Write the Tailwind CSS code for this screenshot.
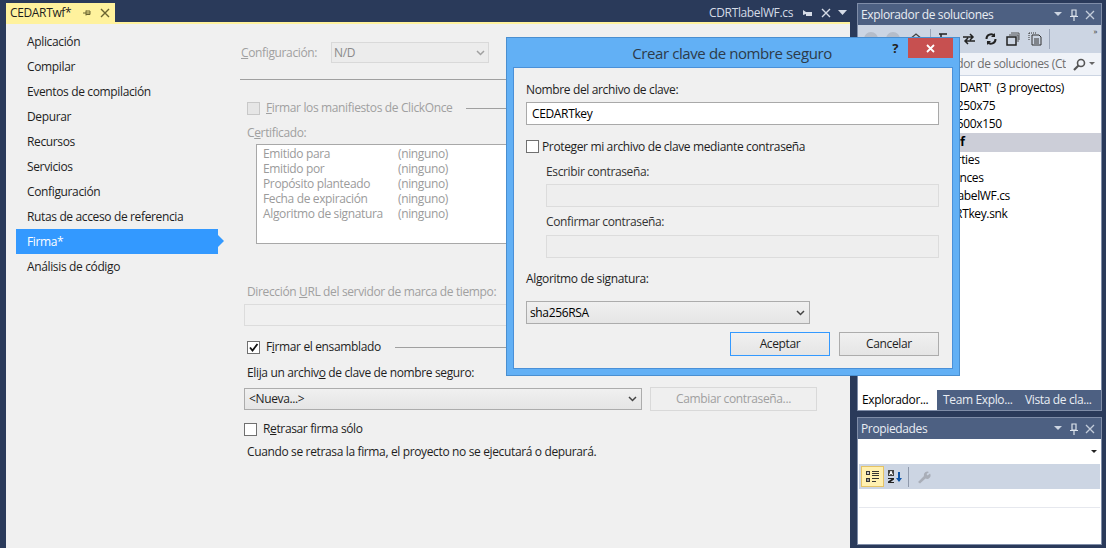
<!DOCTYPE html>
<html lang="es">
<head>
    <meta charset="UTF-8">
    <title>CEDARTwf</title>
    <script src="https://cdn.jsdelivr.net/npm/@tailwindcss/browser@4"></script>
</head>
<body class="w-[1106px] h-[548px] overflow-hidden relative bg-[#2a3a5a] font-['Open_Sans','Noto_Sans',sans-serif] text-[12px] tracking-[-0.36px] text-[#1e1e1e]">
    <div class="flex h-full">
        <!-- editor -->
        <div class="w-[844px] ml-[6px] flex flex-col shrink-0">
            <div class="h-[19px] mt-[3px] flex items-center relative">
                <div class="h-[19px] w-[109px] bg-[#fff29d] flex items-center pl-[4px] text-[#1e1e1e]">
                    <span>CEDARTwf*</span>
                    <svg class="ml-[11px]" width="10" height="10" viewBox="0 0 10 10"><path d="M1 5h3M4 2.500v5M4 3h4v3.500H4M4 5h4" fill="none" stroke="#6b6430"/></svg>
                    <svg class="ml-[8px]" width="10" height="10" viewBox="0 0 10 10"><path d="M1 1l8 8M9 1l-8 8" stroke="#6b6430" stroke-width="1.400"/></svg>
                </div>
                <div class="ml-auto flex items-center text-[#d5dbe6] pr-[3px]">
                    <span>CDRTlabelWF.cs</span>
                    <svg class="ml-[10px]" width="10" height="10" viewBox="0 0 10 10"><path d="M0 2l3 2h6v4H3V6L0 7z" fill="#d5dbe6"/></svg>
                    <svg class="ml-[8px]" width="10" height="10" viewBox="0 0 10 10"><path d="M1 1l8 8M9 1l-8 8" stroke="#d5dbe6" stroke-width="1.400"/></svg>
                    <svg class="ml-[7px]" width="9" height="6" viewBox="0 0 9 6"><path d="M0 0h9L4.500 5z" fill="#d5dbe6"/></svg>
                </div>
            </div>
            <div class="h-[2px] bg-[#fff29d]"></div>
            <div class="flex-1 bg-[#f0f0f0] flex min-h-0">
                <!-- property tabs -->
                <nav class="w-[212px] shrink-0 pt-[5px] pl-[10px]">
                    <div class="h-[25px] flex items-center pl-[11px]">Aplicación</div>
                    <div class="h-[25px] flex items-center pl-[11px]">Compilar</div>
                    <div class="h-[25px] flex items-center pl-[11px]">Eventos de compilación</div>
                    <div class="h-[25px] flex items-center pl-[11px]">Depurar</div>
                    <div class="h-[25px] flex items-center pl-[11px]">Recursos</div>
                    <div class="h-[25px] flex items-center pl-[11px]">Servicios</div>
                    <div class="h-[25px] flex items-center pl-[11px]">Configuración</div>
                    <div class="h-[25px] flex items-center pl-[11px]">Rutas de acceso de referencia</div>
                    <div class="h-[25px] flex items-center pl-[11px] bg-[#3399ff] text-white relative">Firma*<span class="absolute right-[-6px] top-[6px] border-y-[6px] border-y-transparent border-l-[6px] border-l-[#3399ff]"></span></div>
                    <div class="h-[25px] flex items-center pl-[11px]">Análisis de código</div>
                </nav>
                <!-- signing page -->
                <div class="flex-1 min-w-0 pt-[18px] pl-[22px] text-[#a0a0a0]">
                    <div class="flex items-center h-[21px] pl-[1px]">
                        <span class="w-[90px]"><u>C</u>onfiguración:</span>
                        <div class="w-[158px] h-[21px] border border-[#d9d9d9] bg-[#ececec] flex items-center justify-between pl-[2px] pr-[3px] text-[#8a8a8a]">N/D
                            <svg width="9" height="6" viewBox="0 0 9 6"><path d="M1 1l3.500 3.500L8 1" fill="none" stroke="#a0a0a0" stroke-width="1.500"/></svg>
                        </div>
                    </div>
                    <div class="h-px bg-[#a0a0a0] mt-[16px]"></div>
                    <div class="flex items-center mt-[21px] pl-[7px] h-[14px]">
                        <span class="w-[13px] h-[13px] border border-[#c8c8c8] bg-[#e6e6e6] mr-[6px]"></span>
                        <span><u>F</u>irmar los manifiestos de ClickOnce</span>
                        <span class="flex-1 h-px bg-[#a0a0a0] ml-[13px]"></span>
                    </div>
                    <div class="mt-[9px] pl-[7px]">C<u>e</u>rtificado:</div>
                    <div class="ml-[16px] mt-[2px] h-[100px] border border-[#a8a8a8] bg-white pt-[1px] pl-[6px] leading-[15px] text-[#9b9b9b]">
                        <div class="flex"><span class="w-[135px]">Emitido para</span><span>(ninguno)</span></div>
                        <div class="flex"><span class="w-[135px]">Emitido por</span><span>(ninguno)</span></div>
                        <div class="flex"><span class="w-[135px]">Propósito planteado</span><span>(ninguno)</span></div>
                        <div class="flex"><span class="w-[135px]">Fecha de expiración</span><span>(ninguno)</span></div>
                        <div class="flex"><span class="w-[135px]">Algoritmo de signatura</span><span>(ninguno)</span></div>
                    </div>
                    <div class="mt-[39px] pl-[7px]">Dirección <u>U</u>RL del servidor de marca de tiempo:</div>
                    <div class="mt-[3px] mr-[33px] h-[22px] border border-[#dcdcdc] bg-[#f0f0f0] ml-[4px]"></div>
                    <div class="flex items-center mt-[14px] pl-[7px] h-[14px] text-[#1e1e1e]">
                        <span class="w-[13px] h-[13px] border border-[#707070] bg-white mr-[6px] flex items-center justify-center">
                            <svg width="11" height="11" viewBox="0 0 11 11"><path d="M2 5.500l2.500 3L9.500 2" fill="none" stroke="#111" stroke-width="1.800"/></svg>
                        </span>
                        <span>F<u>i</u>rmar el ensamblado</span>
                        <span class="flex-1 h-px bg-[#a0a0a0] ml-[14px]"></span>
                    </div>
                    <div class="mt-[10px] pl-[7px] text-[#1e1e1e]">Elija un archiv<u>o</u> de clave de nombre seguro:</div>
                    <div class="flex items-center mt-[5px] ml-[4px] gap-[8px]">
                        <div class="w-[398px] h-[22px] border border-[#acacac] bg-linear-to-b from-[#f0f0f0] to-[#e5e5e5] flex items-center justify-between px-[4px] text-[#1e1e1e]">&lt;Nueva...&gt;
                            <svg width="9" height="6" viewBox="0 0 9 6"><path d="M1 1l3.500 3.500L8 1" fill="none" stroke="#444" stroke-width="1.500"/></svg>
                        </div>
                        <div class="w-[167px] h-[24px] border border-[#d9d9d9] bg-[#efefef] flex items-center justify-center">Cambiar contraseña...</div>
                    </div>
                    <div class="flex items-center mt-[11px] ml-[4px] h-[14px] text-[#1e1e1e]">
                        <span class="w-[13px] h-[13px] border border-[#707070] bg-white mr-[6px]"></span>
                        <span>R<u>e</u>trasar firma sólo</span>
                    </div>
                    <div class="mt-[7px] pl-[7px] text-[#1e1e1e]">Cuando se retrasa la firma, el proyecto no se ejecutará o depurará.</div>
                </div>
            </div>
        </div>

        <!-- tool windows -->
        <div class="w-[245px] ml-[7px] shrink-0 flex flex-col pt-[3px] pb-[3px]">
            <section class="h-[408px] border border-[#7f8da8] bg-white flex flex-col">
                <div class="h-[21px] bg-[#4d6082] text-[#e9edf3] flex items-center pl-[3px] pr-[6px] shrink-0">
                    <span>Explorador de soluciones</span>
                    <svg class="ml-auto" width="8" height="5" viewBox="0 0 8 5"><path d="M0 0h8L4 4z" fill="#cdd5e2"/></svg>
                    <svg class="ml-[7px]" width="10" height="12" viewBox="0 0 10 12"><path d="M3 1h4v6H3zM1 7.500h8M5 8v4" fill="none" stroke="#dde3ec" stroke-width="1.200"/></svg>
                    <svg class="ml-[6px]" width="10" height="10" viewBox="0 0 10 10"><path d="M1 1l8 8M9 1l-8 8" stroke="#c3ccda" stroke-width="1.300"/></svg>
                </div>
                <div class="h-[28px] bg-[#ccd5e3] shrink-0 flex items-center pl-[6px] relative">
                    <span class="w-[14px] h-[14px] rounded-full bg-[#b5bdca]"></span>
                    <span class="w-[14px] h-[14px] rounded-full bg-[#b5bdca] ml-[8px]"></span>
                    <svg class="ml-[9px]" width="14" height="14" viewBox="0 0 14 14"><path d="M1 7l6-5 6 5M3 6v6h8V6" fill="none" stroke="#444" stroke-width="1.300"/></svg>
                    <span class="w-px h-[20px] bg-[#9aa5b8] ml-[7px]"></span>
                    <svg class="ml-[7px]" width="20" height="12" viewBox="0 0 20 12"><path d="M1 1h8M3 1v8h6" fill="none" stroke="#222" stroke-width="1.500"/><path d="M13 5h6l-3 3z" fill="#222"/></svg>
                    <svg class="ml-[4px]" width="14" height="12" viewBox="0 0 14 12"><path d="M1 4h9M8 1l3 3-3 3M13 8H4M6 5L3 8l3 3" fill="none" stroke="#222" stroke-width="1.500"/></svg>
                    <svg class="ml-[8px]" width="14" height="14" viewBox="0 0 14 14"><path d="M2.500 7a4.500 4.500 0 0 1 8-3M11.500 7a4.500 4.500 0 0 1-8 3" fill="none" stroke="#222" stroke-width="2"/><path d="M11 1v4H7zM3 13V9h4z" fill="#222"/></svg>
                    <svg class="ml-[8px]" width="14" height="14" viewBox="0 0 14 14"><path d="M1 5h9v8H1z" fill="none" stroke="#222" stroke-width="1.500"/><path d="M3 3h9v7M5 1h8v7" fill="none" stroke="#555"/></svg>
                    <svg class="ml-[8px]" width="14" height="14" viewBox="0 0 14 14"><path d="M4 3h7l2 2v8H4zM6 7h5M6 9h5M6 11h5" fill="none" stroke="#333"/><path d="M1 1h7M1 1v8" fill="none" stroke="#333" stroke-dasharray="1 1"/></svg>
                    <span class="w-px h-[20px] bg-[#9aa5b8] ml-[7px]"></span>
                    <span class="absolute right-[4px] top-[2px] text-[8px] leading-[8px] text-[#333]">»</span>
                </div>
                <div class="h-[23px] bg-[#f0f3f8] shrink-0 flex items-center pr-[6px] text-[#6e6e6e] border-b border-[#ccd5e3]">
                    <span class="w-[208px] overflow-hidden whitespace-nowrap flex justify-end">Buscar en Explorador de soluciones (Ct</span>
                    <svg class="ml-auto" width="13" height="13" viewBox="0 0 13 13"><circle cx="8" cy="5" r="3.500" fill="none" stroke="#555" stroke-width="1.600"/><path d="M5.500 7.500L1 12" stroke="#555" stroke-width="2.200"/></svg>
                    <svg class="ml-[3px]" width="6" height="4" viewBox="0 0 6 4"><path d="M0 0h6L3 3z" fill="#666"/></svg>
                </div>
                <ul class="flex-1 text-black leading-[18px] pt-[3px] min-h-0 whitespace-nowrap">
                    <li class="h-[18px] flex justify-end pr-[37px]">Solución 'CEDART'&nbsp; (3 proyectos)</li>
                    <li class="h-[18px] pl-[45px]">CDRTlabel250x75</li>
                    <li class="h-[18px] pl-[45px]">CDRTlabel500x150</li>
                    <li class="h-[19px] pl-[48px] bg-[#ccced8] font-bold">CEDARTwf</li>
                    <li class="h-[18px] pl-[67px] -mt-px">Properties</li>
                    <li class="h-[18px] pl-[67px]">References</li>
                    <li class="h-[18px] pl-[68px]">CDRTlabelWF.cs</li>
                    <li class="h-[18px] pl-[68px]">CEDARTkey.snk</li>
                </ul>
                <div class="h-[20px] bg-[#4d6082] flex shrink-0 text-[#e9edf3]">
                    <div class="w-[79px] bg-white text-black flex items-center pl-[4px]">Explorador...</div>
                    <div class="w-[82px] flex items-center pl-[6px]">Team Explo...</div>
                    <div class="flex items-center pl-[6px]">Vista de cla...</div>
                </div>
            </section>
            <section class="mt-[6px] flex-1 border border-[#7f8da8] bg-white flex flex-col">
                <div class="h-[21px] bg-[#4d6082] text-[#e9edf3] flex items-center pl-[3px] pr-[6px] shrink-0">
                    <span>Propiedades</span>
                    <svg class="ml-auto" width="8" height="5" viewBox="0 0 8 5"><path d="M0 0h8L4 4z" fill="#cdd5e2"/></svg>
                    <svg class="ml-[7px]" width="10" height="12" viewBox="0 0 10 12"><path d="M3 1h4v6H3zM1 7.500h8M5 8v4" fill="none" stroke="#dde3ec" stroke-width="1.200"/></svg>
                    <svg class="ml-[6px]" width="10" height="10" viewBox="0 0 10 10"><path d="M1 1l8 8M9 1l-8 8" stroke="#c3ccda" stroke-width="1.300"/></svg>
                </div>
                <div class="h-[25px] flex justify-end items-center pr-[4px] shrink-0">
                    <svg width="6" height="5" viewBox="0 0 6 5"><path d="M0 1h6L3 4z" fill="#222"/></svg>
                </div>
                <div class="h-[25px] mx-px bg-[#ccd5e3] flex items-center pl-[2px] shrink-0">
                    <div class="w-[23px] h-[21px] bg-[#fff0b0] border border-[#e5c365] flex items-center justify-center">
                        <svg width="15" height="13" viewBox="0 0 15 13"><path d="M1 1h4v4H1zM1 8h4v4H1z" fill="#333"/><path d="M7 1.500h7M7 3.500h7M7 5.500h7M7 8.500h7M7 11.500h4" stroke="#333"/><path d="M2 3h2M3 2v2M2 10h2" stroke="#fff"/></svg>
                    </div>
                    <svg class="ml-[3px]" width="16" height="15" viewBox="0 0 16 15"><path d="M1 1h6v6H1z" fill="#444"/><path d="M2.500 6l1.500-4 1.500 4M3 4.500h2" fill="none" stroke="#fff"/><path d="M1 9h6v1.500L3.500 13H7v1H1v-1.500L4.500 10H1z" fill="#222"/><path d="M12 3v9" stroke="#0e55a8" stroke-width="2"/><path d="M9 9h6l-3 4z" fill="#0e55a8"/></svg>
                    <span class="w-px h-[20px] bg-[#8f99ab] ml-[5px]"></span>
                    <svg class="ml-[8px]" width="14" height="14" viewBox="0 0 14 14"><path d="M1 12l6-6a3.500 3.500 0 0 1 5-4l-2.500 2 1 1.500L13 3.500a3.500 3.500 0 0 1-4.500 5L3 13.500z" fill="#a9aeb8"/></svg>
                </div>
                <div class="h-[19px] mx-px border-b border-[#e6e8ee] shrink-0"></div>
            </section>
        </div>
    </div>

    <!-- modal dialog -->
    <div class="absolute left-[506px] top-[37px] w-[454px] h-[339px] bg-[#62b0f5] border border-[#4a8fd0] flex flex-col">
        <div class="h-[29px] relative flex items-center justify-center shrink-0 text-[15px] tracking-[-0.4px] text-[#2d3b4a] pt-[1px] pr-[2px]">
            Crear clave de nombre seguro
            <span class="absolute right-[61px] top-[2px] text-[13px] font-bold leading-[16px] text-[#222]">?</span>
            <span class="absolute right-[6px] top-0 w-[45px] h-[20px] bg-[#c75050] flex items-center justify-center">
                <svg width="10" height="9" viewBox="0 0 10 9"><path d="M1 1l7 7M8 1L1 8" stroke="#fff" stroke-width="1.800"/></svg>
            </span>
        </div>
        <div class="mx-[6px] flex-1 mb-[6px] bg-[#f0f0f0] border border-[#4a90d8] pl-[12px] pr-[13px] pt-[13px] text-[#1e1e1e]">
            <label class="block">Nombre del archivo de clave:</label>
            <div class="mt-[3px] h-[23px] border border-[#a9a9a9] bg-white flex items-center pl-[5px] text-black">CEDARTkey</div>
            <div class="flex items-center mt-[14px] h-[15px]">
                <span class="w-[13px] h-[13px] border border-[#707070] bg-white mr-[3px]"></span>
                <span>Proteger mi archivo de clave mediante contraseña</span>
            </div>
            <div class="mt-[9px] ml-[20px] text-[#333]">Escribir contraseña:</div>
            <div class="mt-[3px] ml-[20px] h-[23px] border border-[#dcdcdc] bg-[#eeeeee]"></div>
            <div class="mt-[6px] ml-[20px] text-[#333]">Confirmar contraseña:</div>
            <div class="mt-[4px] ml-[20px] h-[23px] border border-[#dcdcdc] bg-[#eeeeee]"></div>
            <div class="mt-[12px]">Algoritmo de signatura:</div>
            <div class="mt-[13px] w-[284px] h-[23px] border border-[#acacac] bg-linear-to-b from-[#f0f0f0] to-[#e5e5e5] flex items-center justify-between pl-[3px] pr-[4px] text-black">sha256RSA
                <svg width="9" height="6" viewBox="0 0 9 6"><path d="M1 1l3.500 3.500L8 1" fill="none" stroke="#444" stroke-width="1.500"/></svg>
            </div>
            <div class="flex justify-end gap-[9px] mt-[8px]">
                <div class="w-[100px] h-[24px] border border-[#3399ff] bg-linear-to-b from-[#f0f0f0] to-[#e5e5e5] flex items-center justify-center">Aceptar</div>
                <div class="w-[100px] h-[24px] border border-[#acacac] bg-linear-to-b from-[#f0f0f0] to-[#e5e5e5] flex items-center justify-center">Cancelar</div>
            </div>
        </div>
    </div>
</body>
</html>
